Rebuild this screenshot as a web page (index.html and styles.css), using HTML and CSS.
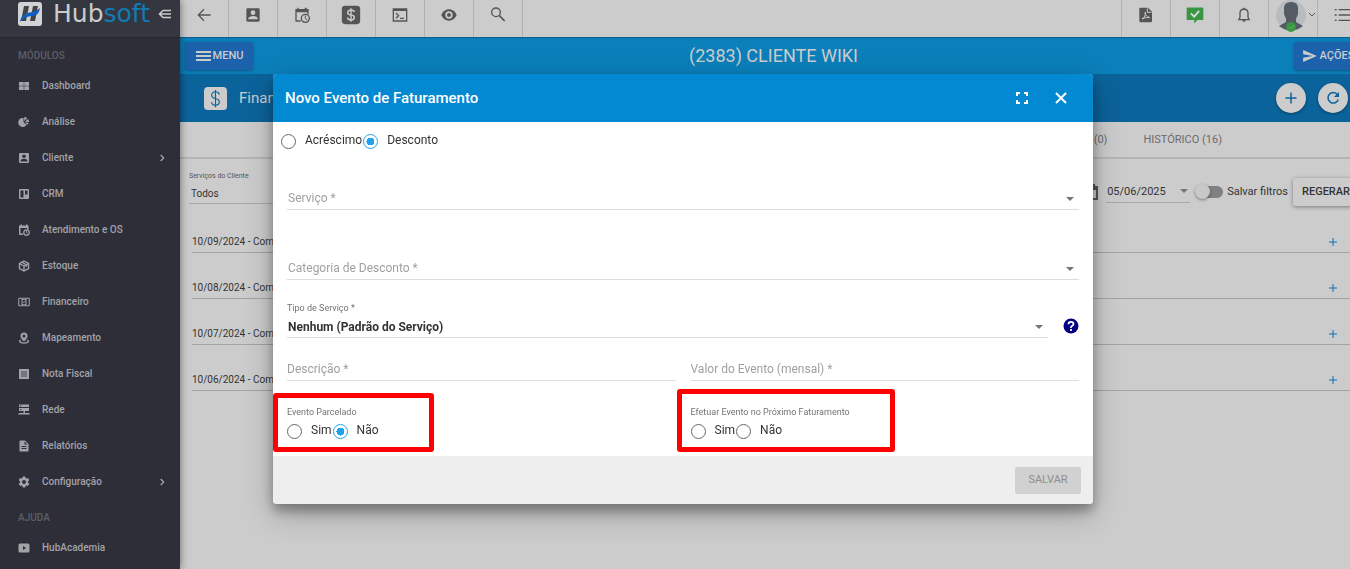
FILE: index.html
```html
<!DOCTYPE html>
<html lang="pt-BR">
<head>
<meta charset="utf-8">
<meta name="viewport" content="width=device-width, initial-scale=1">
<title>Hubsoft - Cliente Wiki</title>
<link rel="stylesheet" href="styles.css">
</head>
<body>
<div class="app">
  <aside class="sidebar">
    <div class="brand">
      <svg class="brand-mark" viewBox="0 0 24 24"><rect width="24" height="24" rx="3" fill="#d2d3d5"/><path d="M6 4h5L8 19H3zM15 4h5l-3 15h-5z" fill="#444"/><path d="M2 20C3 12 9 11 14 10c4-1 6-2 8-4-1 6-4 8-9 8-5 1-8 2-11 6z" fill="#0f5fc4"/></svg>
      <span class="brand-name">Hub<span class="brand-accent">soft</span></span>
      <button class="brand-toggle" aria-label="Recolher menu"><svg viewBox="0 0 14 12" fill="none" stroke="currentColor" stroke-width="1.6"><path d="M5 2.5h8M2 6h11M5 9.5h8M5 2.5L1.500 6L5 9.500"/></svg></button>
    </div>
    <h2 class="nav-title">MÓDULOS</h2>
    <nav class="nav">
      <a href="#"><svg viewBox="0 0 24 24"><path d="M2 4h9.500v7.500H2zM12.500 4H22v7.500h-9.500zM2 12.500h9.500V20H2zM12.500 12.500H22V20h-9.500z"/></svg>Dashboard</a>
      <a href="#"><svg viewBox="0 0 24 24"><path d="M11 4v8l6 6A9 9 0 1 1 11 4zM12.500 2v8l6-5.500A9 9 0 0 0 12.500 2zM20 6l-6.500 6H22a9 9 0 0 0-2-6zM14 13.500l4 4a8 8 0 0 0 3.500-4z"/></svg>Análise</a>
      <a href="#"><svg viewBox="0 0 24 24"><path fill-rule="evenodd" d="M4 2h16a2 2 0 0 1 2 2v16a2 2 0 0 1-2 2H4a2 2 0 0 1-2-2V4a2 2 0 0 1 2-2zm8 3a3.500 3.500 0 1 0 0 7 3.500 3.500 0 0 0 0-7zM5 19h14v-1.500c0-2.500-4.500-4-7-4s-7 1.500-7 4z"/></svg>Cliente<svg class="chevron" viewBox="0 0 24 24"><path d="M8 3l9 9-9 9" fill="none" stroke="currentColor" stroke-width="4"/></svg></a>
      <a href="#"><svg viewBox="0 0 24 24"><path fill-rule="evenodd" d="M4 2h16a2 2 0 0 1 2 2v16a2 2 0 0 1-2 2H4a2 2 0 0 1-2-2V4a2 2 0 0 1 2-2zm1 3v14h6V5zm9 0v8h5V5z"/></svg>CRM</a>
      <a href="#"><svg viewBox="0 0 24 24"><path fill-rule="evenodd" d="M5 1h3v2h8V1h3v2h2v8h-3V8H5v11h5v3H4a2 2 0 0 1-2-2V3h3z"/><circle cx="17" cy="17" r="5.500" fill="none" stroke="currentColor" stroke-width="2.500"/><path d="M17 14v3l2 1" fill="none" stroke="currentColor" stroke-width="2"/></svg>Atendimento e OS</a>
      <a href="#"><svg viewBox="0 0 24 24"><path d="M12 2l9 5v10l-9 5-9-5V7zM3 7l9 5 9-5M12 12v10M7.500 4.500l9 5v4" fill="none" stroke="currentColor" stroke-width="2.800"/></svg>Estoque</a>
      <a href="#"><svg viewBox="0 0 24 24"><path d="M1.500 4.500h21v15h-21z" fill="none" stroke="currentColor" stroke-width="2"/><path fill-rule="evenodd" d="M7 6h10v12H7zm4 1v1H9v5h4v1H9v2h2v1h2v-1h2v-5h-4v-1h4V8h-2V7z"/></svg>Financeiro</a>
      <a href="#"><svg viewBox="0 0 24 24"><path fill-rule="evenodd" d="M12 1a7 7 0 0 1 7 7c0 5-7 11-7 11S5 13 5 8a7 7 0 0 1 7-7zm0 4a3 3 0 1 0 0 6 3 3 0 0 0 0-6z"/><path d="M6 16c-3 1-3 2-3 3 2 4 16 4 18 0 0-1 0-2-3-3" fill="none" stroke="currentColor" stroke-width="2.500"/></svg>Mapeamento</a>
      <a href="#"><svg viewBox="0 0 24 24"><path d="M2 2h20v20H2z"/><path d="M6 6h12v12H6z" fill="#74767e"/></svg>Nota Fiscal</a>
      <a href="#"><svg viewBox="0 0 24 24"><path d="M2 1h20v5H2zM2 8h20v6H2zM11 14h3v4h9v3H1v-3h10z"/><path d="M4 3.500h3M4 11h3" stroke="#2d2e38" stroke-width="1.500"/></svg>Rede</a>
      <a href="#"><svg viewBox="0 0 24 24"><path fill-rule="evenodd" d="M5 1h9l7 7v14a1 1 0 0 1-1 1H4a1 1 0 0 1-1-1V3a2 2 0 0 1 2-2zm8 2v6h6zM7 12v2h10v-2zm0 4v2h10v-2z"/></svg>Relatórios</a>
      <a href="#"><svg viewBox="0 0 24 24"><path fill-rule="evenodd" d="M9.500 1h5l.6 3 2 1.200L20 4l2.500 4.300-2.300 2v3.400l2.300 2L20 20l-2.900-1.200-2 1.200-.6 3h-5l-.6-3-2-1.200L4 20l-2.500-4.300 2.300-2v-3.400l-2.300-2L4 4l2.900 1.200 2-1.200zM12 8a4 4 0 1 0 0 8 4 4 0 0 0 0-8z"/></svg>Configuração<svg class="chevron" viewBox="0 0 24 24"><path d="M8 3l9 9-9 9" fill="none" stroke="currentColor" stroke-width="4"/></svg></a>
    </nav>
    <h2 class="nav-title">AJUDA</h2>
    <nav class="nav">
      <a href="#"><svg viewBox="0 0 24 24"><path fill-rule="evenodd" d="M4 3h16q3 0 3 3v12q0 3-3 3H4q-3 0-3-3V6q0-3 3-3zm6 5v8l6-4z"/></svg>HubAcademia</a>
    </nav>
  </aside>

  <main class="main">
    <div class="toolbar">
      <div class="tools">
        <button aria-label="Voltar"><svg viewBox="0 0 24 24"><path d="M22 12H4M12 3.500L3.500 12l8.500 8.500" fill="none" stroke="currentColor" stroke-width="2"/></svg></button>
        <button aria-label="Clientes"><svg viewBox="0 0 24 24"><path fill-rule="evenodd" d="M4 2h16a2 2 0 0 1 2 2v16a2 2 0 0 1-2 2H4a2 2 0 0 1-2-2V4a2 2 0 0 1 2-2zm8 3a3.500 3.500 0 1 0 0 7 3.500 3.500 0 0 0 0-7zM5 18.500h14v-1.200c0-2.300-4.500-3.800-7-3.800s-7 1.500-7 3.800z"/></svg></button>
        <button aria-label="Agenda"><svg viewBox="0 0 24 24"><path fill-rule="evenodd" d="M5 1h2v2h9V1h3v2h3v8h-2V8H4v12h6v2H3q-1 0-1-1V3h3z"/><circle cx="17" cy="17" r="6" fill="none" stroke="currentColor" stroke-width="2"/><path d="M17 13v4.500l3 2" fill="none" stroke="currentColor" stroke-width="1.500"/></svg></button>
        <button aria-label="Financeiro"><svg class="large" viewBox="0 0 24 24"><rect x="1" y="1" width="22" height="22" rx="4"/><path d="M16 8.500Q15.500 6 12 6T8 9q0 2.500 4 3t4 3q0 3-4 3t-4-3M12 4v16" fill="none" stroke="#ccc" stroke-width="1.700"/></svg></button>
        <button aria-label="Terminal"><svg viewBox="0 0 24 24"><path d="M2 3h20v18H2zM2 5h20M6 9l4 4-4 4M12 17h6" fill="none" stroke="currentColor" stroke-width="2"/></svg></button>
        <button aria-label="Visualizar"><svg viewBox="0 0 24 24"><path fill-rule="evenodd" d="M12 3.500c5 0 9.500 3.300 11.500 8.500-2 5.200-6.500 8.500-11.500 8.500S2.500 17.200.5 12C2.500 6.800 7 3.500 12 3.500zM12 6.500a5.500 5.500 0 1 0 0 11 5.500 5.500 0 0 0 0-11zM12 9a3 3 0 1 1 0 6 3 3 0 0 1 0-6z"/></svg></button>
        <button aria-label="Pesquisar"><svg viewBox="0 0 24 24"><g fill="none" stroke="currentColor" stroke-width="2"><circle cx="9" cy="8" r="6.500"/><path d="M14 13l8 8" stroke-width="2.600"/></g></svg></button>
      </div>
      <div class="tools tools-end">
        <button aria-label="PDF"><svg viewBox="0 0 24 24"><path d="M4 1h11l6 6v14a2 2 0 0 1-2 2H4a2 2 0 0 1-2-2V3a2 2 0 0 1 2-2z"/><path d="M14 2v6h6M6 18c4-2 6-7 5-10-2 0 0 6 7 8-3-1-8 0-12 2z" fill="none" stroke="#ccc" stroke-width="1.500"/></svg></button>
        <button class="ok" aria-label="Mensagens"><svg class="large" viewBox="0 0 24 24"><path d="M3 3h18q1 0 1 1v13q0 1-1 1h-6l-4 4v-4H3q-1 0-1-1V4q0-1 1-1z"/><path d="M7 10l4 4 6-7" fill="none" stroke="#ddd" stroke-width="2"/></svg></button>
        <button aria-label="Notificações"><svg viewBox="0 0 24 24"><path d="M3 19h18M5 18l1-3V9q0-5 6-6 6 1 6 6v6l1 3" fill="none" stroke="currentColor" stroke-width="2"/><path d="M9 20h6q-3 5-6 0zM11 1h2v2h-2z"/></svg></button>
        <button class="user" aria-label="Usuário"><svg class="avatar" viewBox="0 0 32 36"><circle cx="15" cy="15" r="15" fill="#b8bbbf"/><path d="M8 8q0-6 7-6t7 6v6l-2 5v3l7 4q-12 9-24 0l7-4v-3l-2-5z" fill="#555b65"/><circle cx="15" cy="27" r="5" fill="#399743"/><path d="M13 27l2 2 3-4" fill="none" stroke="#69aa70"/></svg><svg class="caret" viewBox="0 0 8 8"><path d="M1 2l3 3 3-3" fill="none" stroke="currentColor"/></svg></button>
        <button aria-label="Lista"><svg viewBox="0 0 24 24"><path d="M1 4h3M1 12h3M1 20h3M7 4h17M7 12h17M7 20h17" fill="none" stroke="currentColor" stroke-width="2"/></svg></button>
      </div>
    </div>

    <header class="client-bar">
      <button class="bar-button"><svg viewBox="0 0 16 12"><path d="M1 2h15M1 6h15M1 10h15" stroke="currentColor" stroke-width="2"/></svg>MENU</button>
      <h1>(2383) CLIENTE WIKI</h1>
      <button class="bar-button"><svg viewBox="0 0 16 14"><path d="M0 0l16 7-16 7V9l11-2L0 5z" fill="currentColor"/></svg>AÇÕES</button>
    </header>

    <section class="section-bar">
      <svg class="money" viewBox="0 0 24 24"><rect width="24" height="24" rx="4" fill="#ccc"/><path d="M16 8Q15.500 5 12 5T8 8.500Q8 11 12 12t4 3.500q0 3.500-4 3.500t-4-3M12 3v18" fill="none" stroke="#0b639b" stroke-width="1.200"/></svg>
      <h2>Financeiro</h2>
      <button class="round" aria-label="Adicionar"><svg viewBox="0 0 14 14"><path d="M7 1.500v11M1.500 7h11" stroke="currentColor" stroke-width="1.500"/></svg></button>
      <button class="round" aria-label="Atualizar"><svg viewBox="0 0 14 14"><path d="M11.500 3.500A5.300 5.300 0 1 0 12.300 8.500" fill="none" stroke="currentColor" stroke-width="1.500"/><path d="M13 1v5H8z" fill="currentColor"/></svg></button>
    </section>

    <nav class="tabs"><a href="#">EVENTOS (0)</a><a href="#">HISTÓRICO (16)</a></nav>

    <section class="filters">
      <div class="filter-client">
        <label for="clientes">Serviços do Cliente</label>
        <select id="clientes"><option>Todos</option></select>
      </div>
      <svg class="calendar" viewBox="0 0 14 16"><path d="M1 3h12v12H1z" fill="none" stroke="currentColor" stroke-width="2"/><path d="M1 2h12v4H1zM3 0h2v3H3zM9 0h2v3H9z" fill="currentColor"/></svg>
      <div class="select-wrap date"><select aria-label="Data"><option>05/06/2025</option></select></div>
      <label class="switch"><input type="checkbox"><span class="track"></span>Salvar filtros</label>
      <button class="regen">REGERAR</button>
    </section>

    <ul class="rows">
      <li><span>10/09/2024 - Competência</span><button aria-label="Expandir"><svg viewBox="0 0 10 10"><path d="M5 1v8M1 5h8" stroke="currentColor"/></svg></button></li>
      <li><span>10/08/2024 - Competência</span><button aria-label="Expandir"><svg viewBox="0 0 10 10"><path d="M5 1v8M1 5h8" stroke="currentColor"/></svg></button></li>
      <li><span>10/07/2024 - Competência</span><button aria-label="Expandir"><svg viewBox="0 0 10 10"><path d="M5 1v8M1 5h8" stroke="currentColor"/></svg></button></li>
      <li><span>10/06/2024 - Competência</span><button aria-label="Expandir"><svg viewBox="0 0 10 10"><path d="M5 1v8M1 5h8" stroke="currentColor"/></svg></button></li>
    </ul>
  </main>
</div>

<div class="backdrop">
  <form class="dialog" role="dialog" aria-labelledby="dialog-title">
    <header class="dialog-head">
      <h2 id="dialog-title">Novo Evento de Faturamento</h2>
      <button type="button" aria-label="Tela cheia"><svg viewBox="0 0 12 12"><path d="M1 4V1h3M8 1h3v3M11 8v3H8M4 11H1V8" fill="none" stroke="currentColor" stroke-width="2"/></svg></button>
      <button type="button" aria-label="Fechar"><svg viewBox="0 0 12 12"><path d="M1 1l10 10M11 1L1 11" stroke="currentColor" stroke-width="2"/></svg></button>
    </header>
    <div class="dialog-body">
      <div class="radios kind">
        <label><input type="radio" name="tipo">Acréscimo</label>
        <label><input type="radio" name="tipo" checked>Desconto</label>
      </div>
      <div class="select-wrap service"><select class="empty" aria-label="Serviço"><option>Serviço *</option></select></div>
      <div class="select-wrap category"><select class="empty" aria-label="Categoria de Desconto"><option>Categoria de Desconto *</option></select></div>
      <div class="type-row">
        <div class="type-field">
          <label class="caption" for="tipo-servico">Tipo de Serviço *</label>
          <div class="select-wrap"><select class="filled" id="tipo-servico"><option>Nenhum (Padrão do Serviço)</option></select></div>
        </div>
        <button type="button" class="help" aria-label="Ajuda"><svg viewBox="0 0 16 16"><circle cx="8" cy="8" r="7.500" fill="#000080"/><path d="M5.500 6.200Q5.500 3.800 8 3.800t2.500 2.200Q10.500 7.200 9 8T8 10M8 11v2" fill="none" stroke="#fff" stroke-width="1.800"/></svg></button>
      </div>
      <div class="pair inputs">
        <input type="text" placeholder="Descrição *" aria-label="Descrição">
        <input type="text" placeholder="Valor do Evento (mensal) *" aria-label="Valor do Evento (mensal)">
      </div>
      <div class="pair choices">
        <fieldset class="mark-parcel">
          <legend class="caption">Evento Parcelado</legend>
          <div class="radios">
            <label><input type="radio" name="parcelado">Sim</label>
            <label><input type="radio" name="parcelado" checked>Não</label>
          </div>
        </fieldset>
        <fieldset class="mark-next">
          <legend class="caption">Efetuar Evento no Próximo Faturamento</legend>
          <div class="radios">
            <label><input type="radio" name="proximo">Sim</label>
            <label><input type="radio" name="proximo">Não</label>
          </div>
        </fieldset>
      </div>
    </div>
    <footer class="dialog-foot"><button type="submit" disabled>SALVAR</button></footer>
  </form>
</div>
</body>
</html>
```

FILE: styles.css
```css
*, *::before, *::after { box-sizing: border-box; }
body { margin: 0; overflow: hidden; background: #ccc; font: 12px/16px Roboto, "Liberation Sans", sans-serif; color: #333; }
button, input, select { font: inherit; color: inherit; margin: 0; }
button { border: 0; padding: 0; background: none; }
h1, h2, ul, fieldset, legend { margin: 0; padding: 0; border: 0; font-weight: 400; }
a { color: inherit; text-decoration: none; }
select { appearance: none; background: none; border: 0; border-radius: 0; }
svg { display: block; flex: none; }

.app { display: flex; width: calc(100% + 16px); min-height: 100vh; }

.sidebar { flex: none; width: 180px; background: #2d2e38; color: #a2a3a8; font-size: 10px; font-weight: 500; box-shadow: 0 0 8px rgba(0, 0, 0, .5); z-index: 1; }
.brand { display: flex; align-items: center; height: 38px; padding: 0 8px 10px 18px; background: #34373f; border-bottom: 1px solid #25262c; }
.brand-mark { width: 24px; height: 24px; }
.brand-name { flex: 1; margin-left: 11px; font: 25px/24px "DejaVu Sans", sans-serif; color: #ccc; }
.brand-accent { color: #127bb5; }
.brand-toggle svg { width: 14px; height: 12px; color: #ccc; }
.nav-title { padding: 10px 18px 4px; font-size: 10px; line-height: 16px; font-weight: 500; color: #5c5e66; }
.nav a { display: flex; align-items: center; height: 36px; padding: 0 14px 0 18px; }
.nav svg { width: 12px; height: 12px; margin-right: 12px; fill: currentColor; }
.nav .chevron { width: 8px; height: 8px; margin: 0 0 0 auto; }

.main { flex: 1; min-width: 0; background: #ccc; }
.toolbar { display: flex; justify-content: space-between; height: 38px; color: #555; border-bottom: 1px solid #0a5f8d; }
.tools { display: flex; }
.tools button { display: flex; align-items: center; justify-content: center; width: 49px; padding-bottom: 8px; border-right: 1px solid #b2b2b2; }
.tools-end button { border-right: 0; border-left: 1px solid #b2b2b2; }
.tools svg { width: 16px; height: 16px; fill: currentColor; }
.tools .large { width: 20px; height: 20px; }
.tools .ok { color: #399743; }
.tools .user { padding: 0 0 0 6px; align-items: flex-start; }
.tools .avatar { width: 32px; height: 36px; }
.tools .caret { width: 8px; height: 8px; margin-top: 11px; }

.client-bar { display: flex; align-items: center; justify-content: space-between; height: 36px; padding: 0 4px 0 5px; background: #0b7fba; color: #ccc; }
.client-bar h1 { font-size: 18px; line-height: 24px; }
.bar-button { display: flex; align-items: center; justify-content: center; gap: 2px; min-width: 68px; height: 28px; border-radius: 3px; background: #1b61ac; font-size: 11px; font-weight: 500; box-shadow: 0 1px 3px rgba(0, 0, 0, .3); }
.bar-button svg { width: 16px; height: 12px; }

.section-bar { display: flex; align-items: center; height: 48px; padding: 0 18px 0 24px; gap: 12px; background: #0b639b; color: #ccc; }
.section-bar h2 { flex: 1; font-size: 15px; }
.money { width: 23px; height: 23px; }
.round { display: grid; place-items: center; width: 30px; height: 30px; border-radius: 50%; background: #ccc; color: #0b639b; box-shadow: 0 1px 3px rgba(0, 0, 0, .4); }
.round svg { width: 14px; height: 14px; }

.tabs { display: flex; justify-content: flex-end; gap: 36px; height: 37px; padding: 0 144px 0 0; border-bottom: 2px solid #b5b5b5; color: #6b6b6b; font-size: 11px; line-height: 35px; }
.filters { display: flex; align-items: center; height: 66px; padding-left: 9px; font-size: 11px; }
.filter-client { flex: 1; align-self: flex-start; padding-top: 11px; margin-right: 8px; }
.filter-client label { display: block; font-size: 7px; line-height: 12px; color: #555; }
.filter-client select { display: block; width: 100%; height: 22px; padding: 2px 0 0 2px; border-bottom: 1px solid #a8a8a8; font-size: 10px; }
.calendar { width: 14px; height: 16px; margin-right: 8px; color: #555; }
.select-wrap { position: relative; }
.select-wrap::after { content: ""; position: absolute; right: 5px; top: 9px; border: 4px solid transparent; border-top-color: #757575; border-bottom: 0; pointer-events: none; }
.select-wrap select { display: block; width: 100%; height: 22px; padding: 0 0 2px 1px; border-bottom: 1px solid #ddd; }
.date { width: 84px; }
.date::after { right: 2px; top: 8px; }
.date select { padding-bottom: 0; border-bottom-color: #a8a8a8; }
.switch { display: flex; align-items: center; gap: 4px; margin: 0 5px; white-space: nowrap; }
.switch input { position: absolute; opacity: 0; }
.track { position: relative; width: 28px; height: 12px; background: #808080; background-clip: content-box; padding-left: 6px; border-radius: 6px; }
.track::before { content: ""; position: absolute; left: 0; top: -2px; width: 15px; height: 15px; border-radius: 50%; background: #c8c8c8; box-shadow: 0 1px 3px rgba(0, 0, 0, .4); }
.regen { height: 28px; width: 73px; padding-left: 9px; text-align: left; border-radius: 3px; font-weight: 500; box-shadow: 0 1px 4px rgba(0, 0, 0, .4); }

.rows { list-style: none; padding: 0 8px 0 12px; font-size: 10px; }
.rows li { display: flex; justify-content: space-between; align-items: flex-end; height: 46px; padding: 0 17px 2px 0; border-bottom: 1px solid #a3a3a3; }
.rows li:first-child { height: 28px; }
.rows button { padding: 3px; color: #0d6fb8; }
.rows svg { width: 10px; height: 10px; }

.backdrop { position: fixed; inset: 0; z-index: 2; display: flex; align-items: center; justify-content: center; padding: 9px 0 0 16px; }
.dialog { width: 820px; max-width: 80%; border-radius: 4px; background: #fff; box-shadow: 0 7px 12px rgba(0, 0, 0, .3), 0 10px 30px rgba(0, 0, 0, .25); }
.dialog-head { display: flex; align-items: center; gap: 27px; height: 48px; padding: 0 26px 0 12px; border-radius: 4px 4px 0 0; background: #0388d2; color: #fff; }
.dialog-head h2 { flex: 1; font-size: 15px; font-weight: 500; }
.dialog-head svg { width: 12px; height: 12px; }
.dialog-body { padding: 9px 14px 15px; }
.radios { display: flex; gap: 1px; height: 20px; }
.radios label { display: flex; align-items: flex-start; line-height: 18px; }
.radios input { appearance: none; width: 15px; height: 15px; margin: 3px 9px 0 0; border: 1px solid #666; border-radius: 50%; }
.radios input:checked { border-color: #1fa2ea; background: radial-gradient(circle, #1fa2ea 4px, transparent 4px); }
.kind { margin-left: -6px; }
.service { margin-top: 37px; }
.category { margin-top: 48px; }
.empty { color: #a0a0a0; }
.filled { font-weight: 700; }
.caption { display: block; font-size: 9px; line-height: 12px; color: #737373; }
.type-row { display: flex; align-items: flex-end; gap: 15px; margin-top: 22px; }
.type-field { flex: 1; }
.type-field .select-wrap { margin-top: 2px; }
.type-field select { padding-bottom: 0; }
.help { margin-bottom: 4px; }
.help svg { width: 16px; height: 16px; }
.pair { display: grid; grid-template-columns: 1fr 1fr; gap: 15px; }
.inputs { margin-top: 21px; }
.inputs input { width: 100%; height: 22px; padding: 0 0 2px; border: 0; border-bottom: 1px solid #ddd; background: none; }
.inputs input::placeholder { color: #a0a0a0; }
.choices { margin-top: 25px; }
.choices fieldset { position: relative; min-width: 0; }
.choices .radios { margin-top: 3px; }
/* highlight frames around the two option groups */
.choices fieldset::after { content: ""; position: absolute; border: 5px solid #f00; border-radius: 3px; pointer-events: none; }
.mark-parcel::after { left: -14px; top: -25px; width: 161px; height: 59px; }
.mark-next::after { left: -14px; top: -29px; width: 218px; height: 63px; }
.dialog-foot { display: flex; align-items: center; justify-content: flex-end; height: 48px; padding: 0 12px; border-radius: 0 0 4px 4px; background: #eee; }
.dialog-foot button { width: 66px; height: 27px; border-radius: 2px; background: #d1d1d1; color: #8e8e8e; font-size: 11px; }
```
